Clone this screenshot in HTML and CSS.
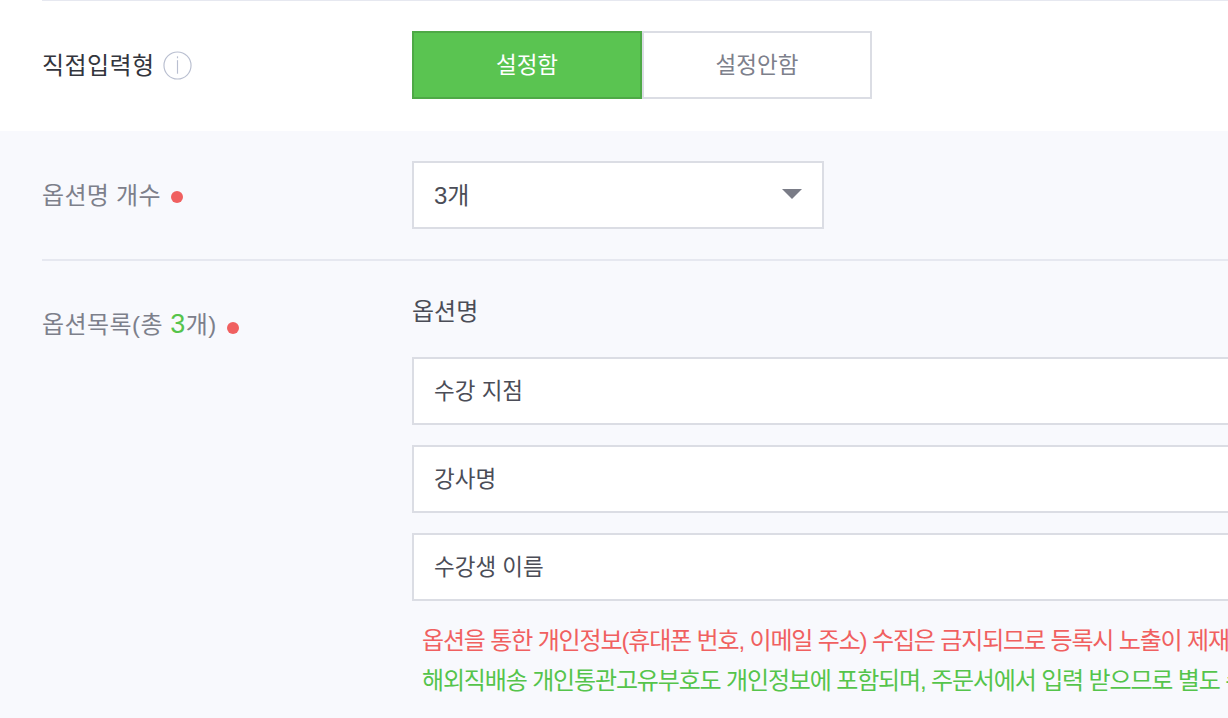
FILE: index.html
```html
<!DOCTYPE html>
<html lang="ko">
<head>
<meta charset="utf-8">
<title>옵션</title>
<link rel="stylesheet" href="styles.css">
</head>
<body>
<div class="page">
  <section class="direct">
    <div class="direct-row">
      <div class="label-col strong-label">
        <span>직접입력형</span>
        <svg class="info" viewBox="0 0 30 30" aria-hidden="true"><circle cx="15" cy="15" r="14" fill="none" stroke="#b9bfd0" stroke-width="1.2"/><rect x="14.4" y="9.5" width="1.2" height="14" fill="#b9bfd0"/><rect x="14.4" y="5.5" width="1.2" height="2" fill="#b9bfd0"/></svg>
      </div>
      <div class="toggle">
        <div class="toggle-btn on"><span>설정함</span></div>
        <div class="toggle-btn off"><span>설정안함</span></div>
      </div>
    </div>
  </section>
  <section class="options">
    <div class="count-row">
      <div class="label-col soft-label"><span>옵션명 개수</span><i class="dot"></i></div>
      <div class="select"><span>3개</span><i class="caret"></i></div>
    </div>
    <div class="list-row">
      <div class="label-col soft-label list-label"><span>옵션목록(총 <b class="num">3</b>개)</span><i class="dot"></i></div>
      <div class="list-body">
        <div class="col-title">옵션명</div>
        <div class="field"><span>수강 지점</span></div>
        <div class="field"><span>강사명</span></div>
        <div class="field"><span>수강생 이름</span></div>
        <p class="note red">옵션을 통한 개인정보(휴대폰 번호, 이메일 주소) 수집은 금지되므로 등록시 노출이 제재</p>
        <p class="note green">해외직배송 개인통관고유부호도 개인정보에 포함되며, 주문서에서 입력 받으므로 별도 수</p>
      </div>
    </div>
  </section>
</div>
</body>
</html>
```
FILE: styles.css
```css
* { box-sizing: border-box; }
html, body { margin: 0; padding: 0; height: 718px; overflow: hidden; background: #fff; }
body { font-family: "Liberation Sans", "Noto Sans CJK KR", sans-serif; font-size: 24px; color: #4b4d57; }
.page { width: 1228px; height: 718px; overflow: hidden; display: flex; flex-direction: column; }
.direct { height: 131px; padding-left: 42px; }
.direct-row { height: 131px; border-top: 1px solid #e6e8f0; display: flex; padding-top: 30px; }
.label-col { width: 370px; flex: none; display: flex; align-items: center; white-space: nowrap; }
.label-col > span, .toggle-btn > span, .select > span, .field > span { padding-bottom: 4px; }
.strong-label { height: 68px; color: #33353d; gap: 10px; letter-spacing: 0.4px; }
.info { width: 29px; height: 29px; display: block; margin-left: -1px; }
.toggle { display: flex; font-size: 22.5px; }
.toggle-btn { width: 230px; height: 68px; display: flex; align-items: center; justify-content: center; border: 2px solid #dbdde4; }
.toggle-btn.on { background: #5ac451; border-color: #4ea946; color: #fff; }
.toggle-btn.off { color: #7d808b; }
.options { flex: 1; background: #f8f9fd; padding: 30px 0 0 42px; }
.count-row { height: 100px; display: flex; border-bottom: 2px solid #e6e8f0; }
.count-row .label-col { height: 68px; }
.soft-label { color: #7d808b; gap: 10px; letter-spacing: 0.3px; }
.dot { width: 12px; height: 12px; border-radius: 50%; background: #f06060; display: block; margin-top: 3px; }
.select { width: 412px; height: 68px; background: #fff; border: 2px solid #dbdde4; display: flex; align-items: center; justify-content: space-between; padding: 0 20px; }
.caret { width: 0; height: 0; border-left: 10px solid transparent; border-right: 10px solid transparent; border-top: 10px solid #7a7c87; margin-top: -2px; }
.list-row { display: flex; padding-top: 32px; }
.list-label { height: 68px; align-items: flex-start; padding-top: 12px; letter-spacing: 0.45px; }
.list-label .dot { margin-top: 17px; }
.num { font-weight: 400; font-size: 27px; line-height: 1; color: #55c44b; }
.list-body { width: 830px; flex: none; }
.col-title { height: 64px; line-height: 37px; }
.field { width: 830px; height: 68px; background: #fff; border: 2px solid #dbdde4; display: flex; align-items: center; padding: 0 20px; margin-bottom: 20px; white-space: nowrap; font-size: 22.5px; }
.note { margin: 0 0 0 10px; height: 40px; line-height: 40px; font-size: 24px; letter-spacing: -1.15px; white-space: nowrap; }
.field + .note { margin-top: 18px; }
.red { color: #f06060; }
.green { color: #55c44b; }
```
